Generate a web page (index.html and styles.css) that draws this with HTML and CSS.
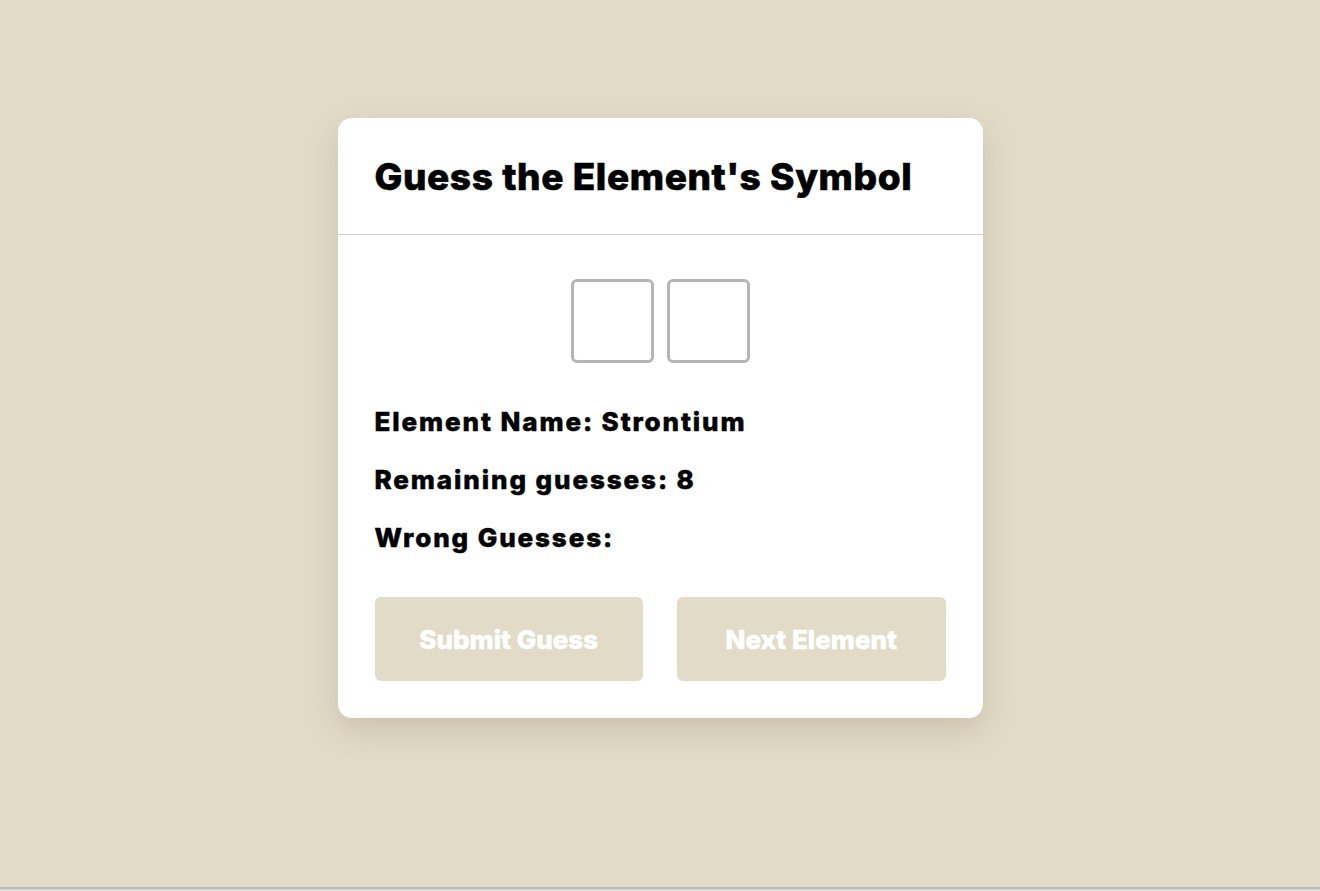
FILE: index.html
```html
<!DOCTYPE html>
<html lang="en">
<head>
<meta charset="utf-8">
<title>Guess the Element's Symbol</title>
<link rel="stylesheet" href="styles.css">
</head>
<body>
<main class="page">
  <section class="card">
    <header class="card-header">
      <h1 class="title">Guess the Element's Symbol</h1>
    </header>
    <div class="card-body">
      <div class="slots">
        <div class="slot"></div>
        <div class="slot"></div>
      </div>
      <p class="info">Element Name: Strontium</p>
      <p class="info">Remaining guesses: 8</p>
      <p class="info">Wrong Guesses:</p>
      <div class="actions">
        <button class="btn" type="button">Submit Guess</button>
        <button class="btn" type="button">Next Element</button>
      </div>
    </div>
  </section>
</main>
</body>
</html>
```
FILE: styles.css
```css
* { box-sizing: border-box; }
html, body { margin: 0; padding: 0; }
body {
  background: #e2dbc8;
  font-family: "Inter", "Noto Sans", sans-serif;
  color: #000;
  min-height: 100vh;
}
.page {
  min-height: calc(100vh - 2px);
  border-bottom: 2px solid #aebccb;
  padding-top: 118px;
}
.card {
  width: 645px;
  margin: 0 auto;
  background: #fff;
  border-radius: 14px;
  box-shadow: 0 12px 30px rgba(120, 105, 70, 0.22);
}
.card-header {
  height: 117px;
  border-bottom: 1px solid #cfcfcf;
  padding: 0 37px;
  display: flex;
  align-items: center;
}
.title {
  margin: 0;
  font-size: 37px;
  font-weight: 800;
  letter-spacing: 0.6px;
  -webkit-text-stroke: 0.6px #000;
}
.card-body {
  padding: 44px 37px 37px;
}
.slots {
  display: flex;
  justify-content: center;
  gap: 13px;
  margin-bottom: 29px;
}
.slot {
  width: 83px;
  height: 84px;
  border: 3px solid #b5b5b5;
  border-radius: 6px;
}
.info {
  margin: 0;
  height: 58px;
  display: flex;
  align-items: center;
  margin-top: -14px;
  margin-bottom: 14px;
  font-size: 26px;
  font-weight: 800;
  letter-spacing: 1.9px;
  -webkit-text-stroke: 0.5px #000;
}
.info:first-of-type { margin-top: 0; }
.actions {
  display: flex;
  gap: 34px;
  margin-top: 31px;
}
.btn {
  flex: 1;
  height: 84px;
  border: none;
  border-radius: 6px;
  background: #e2dbc8;
  color: #fff;
  font-family: inherit;
  font-size: 26px;
  font-weight: 800;
  letter-spacing: 0;
  -webkit-text-stroke: 0.5px #fff;
}
```
